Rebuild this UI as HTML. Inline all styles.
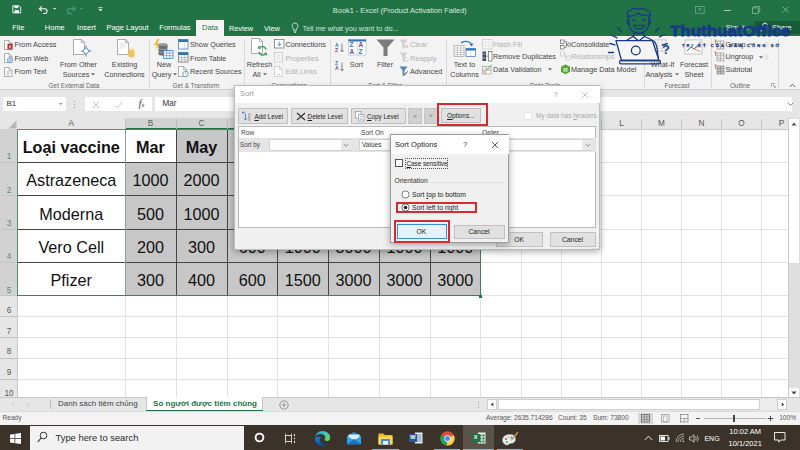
<!DOCTYPE html>
<html lang="vi"><head><meta charset="utf-8"><title>Book1 - Excel</title>
<style>
html,body{margin:0;padding:0;}
body{width:800px;height:450px;overflow:hidden;position:relative;background:#fff;font-family:"Liberation Sans",sans-serif;}
#app{position:absolute;left:0;top:0;width:800px;height:450px;overflow:hidden;}
#app div,#app svg{position:absolute;box-sizing:border-box;}
.t{white-space:nowrap;}
u{text-decoration:underline;text-decoration-thickness:0.5px;text-underline-offset:0.5px;}
</style></head><body><div id="app">
<div style="left:0px;top:0px;width:800px;height:35.5px;background:#217346;"></div>
<svg style="left:12px;top:5.3px;" width="9.5" height="8.7" viewBox="0 0 12 11"><path d="M1 1h8l2 2v7H1z" fill="none" stroke="#fff" stroke-width="1.1"/><rect x="3" y="1" width="5" height="3" fill="#fff"/><rect x="3.2" y="6.5" width="5.6" height="3.5" fill="#fff"/></svg>
<svg style="left:38px;top:5.3px;" width="11.5" height="9" viewBox="0 0 14 11"><path d="M2 4.5h6a3 3 0 0 1 0 6H6" fill="none" stroke="#fff" stroke-width="1.3"/><path d="M4.6 1.6L1.6 4.5l3 2.9" fill="none" stroke="#fff" stroke-width="1.3"/></svg>
<svg style="left:52.5px;top:8.3px;" width="4" height="2.4" viewBox="0 0 5 3"><path d="M0 0h4L2 2.2z" fill="#dfe9e3"/></svg>
<svg style="left:65px;top:5.3px;" width="11.5" height="9" viewBox="0 0 14 11"><path d="M12 4.5H6a3 3 0 0 0 0 6h2" fill="none" stroke="#5f9a7b" stroke-width="1.3"/><path d="M9.4 1.6l3 2.9-3 2.9" fill="none" stroke="#5f9a7b" stroke-width="1.3"/></svg>
<svg style="left:79.5px;top:8.3px;" width="4" height="2.4" viewBox="0 0 5 3"><path d="M0 0h4L2 2.2z" fill="#5f9a7b"/></svg>
<svg style="left:98px;top:6.8px;" width="5" height="5" viewBox="0 0 6 6"><path d="M0.5 0.8h5" stroke="#fff" stroke-width="0.9"/><path d="M0.5 2.6h5L3 5.2z" fill="#fff"/></svg>
<div class="t" style="top:5.7px;font-size:7.4px;line-height:9.6px;color:#d9e8df;left:399.8px;transform:translateX(-50%);">Book1 - Excel (Product Activation Failed)</div>
<svg style="left:695px;top:5.6px;" width="9.6" height="8" viewBox="0 0 12 10"><rect x="0.5" y="0.5" width="11" height="8.5" fill="none" stroke="#7fae94" stroke-width="0.9"/><path d="M6 2.5v4M4.3 4.2L6 2.5l1.7 1.7" fill="none" stroke="#7fae94" stroke-width="0.9"/></svg>
<div style="left:724.3px;top:10px;width:7.2px;height:0.9px;background:#a9c9b7;"></div>
<svg style="left:752.3px;top:5.8px;" width="8.5" height="7.8" viewBox="0 0 11 10"><rect x="0.5" y="2.5" width="7.5" height="7" fill="none" stroke="#a9c9b7" stroke-width="0.800"/><path d="M2.5 2.5V0.5H10v7H8" fill="none" stroke="#a9c9b7" stroke-width="0.800"/></svg>
<svg style="left:782px;top:6px;" width="7.2" height="7.2" viewBox="0 0 10 10"><path d="M1 1l8 8M9 1l-8 8" stroke="#b5d1c1" stroke-width="0.900"/></svg>
<div class="t" style="top:23.4px;font-size:7.5px;line-height:9.8px;color:#fff;left:18.3px;transform:translateX(-50%);">File</div>
<div class="t" style="top:23.4px;font-size:7.5px;line-height:9.8px;color:#fff;left:54.8px;transform:translateX(-50%);">Home</div>
<div class="t" style="top:23.4px;font-size:7.5px;line-height:9.8px;color:#fff;left:86.5px;transform:translateX(-50%);">Insert</div>
<div class="t" style="top:23.4px;font-size:7.5px;line-height:9.8px;color:#fff;left:127.5px;transform:translateX(-50%);">Page Layout</div>
<div class="t" style="top:23.4px;font-size:7.5px;line-height:9.8px;color:#fff;left:175px;transform:translateX(-50%);">Formulas</div>
<div style="left:196px;top:20px;width:28px;height:16px;background:#f3f3f3;"></div>
<div class="t" style="top:23.4px;font-size:7.5px;line-height:9.8px;color:#217346;left:210px;transform:translateX(-50%);">Data</div>
<div class="t" style="top:23.5px;font-size:7.4px;line-height:9.6px;color:#fff;left:241px;transform:translateX(-50%);">Review</div>
<div class="t" style="top:23.5px;font-size:7.4px;line-height:9.6px;color:#fff;left:272px;transform:translateX(-50%);">View</div>
<svg style="left:291px;top:22px;" width="8" height="12" viewBox="0 0 8 12"><path d="M4 1a3 3 0 0 0-1.6 5.5V8h3.2V6.500A3 3 0 0 0 4 1z" fill="none" stroke="#e6f0ea" stroke-width="0.8"/><path d="M2.6 9.300h2.800M3 10.500h2" stroke="#e6f0ea" stroke-width="0.7"/></svg>
<div class="t" style="top:23.55px;font-size:7.3px;line-height:9.5px;color:#d3e3da;left:302.5px;">Tell me what you want to do...</div>
<div class="t" style="top:22.7px;font-size:7.4px;line-height:9.6px;color:#e8f1ec;left:737px;transform:translateX(-50%);">Sign in</div>
<div style="left:754px;top:20.5px;width:46px;height:13.5px;background:#185c37;"></div>
<svg style="left:760px;top:22px;" width="10" height="10" viewBox="0 0 10 10"><circle cx="5" cy="3.2" r="2.2" fill="none" stroke="#fff" stroke-width="0.9"/><path d="M1 9.500c0-2.200 1.800-3.400 4-3.400s4 1.200 4 3.400" fill="none" stroke="#fff" stroke-width="0.9"/></svg>
<div class="t" style="top:22.7px;font-size:7.4px;line-height:9.6px;color:#fff;left:772px;">Share</div>
<div style="left:0px;top:35.5px;width:800px;height:54px;background:#f3f3f3;"></div>
<div style="left:0px;top:89.3px;width:800px;height:0.8px;background:#d0d0d0;"></div>
<div style="left:0px;top:90px;width:800px;height:28px;background:#e6e6e6;"></div>
<div style="left:3px;top:97px;width:63px;height:14px;background:#fff;"></div>
<div class="t" style="top:99.1px;font-size:8px;line-height:10.4px;color:#333;left:6.5px;">B1</div>
<svg style="left:58.5px;top:102.8px;" width="4" height="3" viewBox="0 0 4 3"><path d="M0 0h3.600L1.800 2z" fill="#888"/></svg>
<div style="left:74px;top:100.5px;width:1px;height:1px;background:#999;"></div>
<div style="left:74px;top:103.5px;width:1px;height:1px;background:#999;"></div>
<div style="left:74px;top:106.5px;width:1px;height:1px;background:#999;"></div>
<div style="left:85px;top:97px;width:67px;height:14px;background:#fff;"></div>
<svg style="left:92px;top:100.5px;" width="8" height="8" viewBox="0 0 8 8"><path d="M1 1l6 6M7 1l-6 6" stroke="#bdbdbd" stroke-width="0.9"/></svg>
<svg style="left:114px;top:100.5px;" width="9" height="8" viewBox="0 0 9 8"><path d="M1 4.500l2.500 2.500L8 1" fill="none" stroke="#bdbdbd" stroke-width="0.9"/></svg>
<div class="t" style="top:97.15px;font-size:10.5px;line-height:13.7px;color:#444;left:141.5px;transform:translateX(-50%);font-family:'Liberation Serif',serif;"><i>f</i><span style="font-size:6.500px;font-style:italic">x</span></div>
<div style="left:155px;top:97px;width:637px;height:14px;background:#fff;"></div>
<div class="t" style="top:98.95px;font-size:8.2px;line-height:10.7px;color:#333;left:162.5px;">Mar</div>
<svg style="left:787px;top:102px;" width="7" height="5" viewBox="0 0 7 5"><path d="M0.800 0.800l2.700 2.700 2.700-2.700" fill="none" stroke="#777" stroke-width="0.9"/></svg>
<svg style="left:3.5px;top:39.5px;" width="10" height="11" viewBox="0 0 10 11"><path d="M0.5 0.5h4.5l3 3v6h-7.5z" fill="#fff" stroke="#8c8c8c" stroke-width="0.700"/><path d="M5.0 0.5v3h3" fill="none" stroke="#8c8c8c" stroke-width="0.600"/><rect x="3.500" y="3.800" width="5" height="5.700" fill="#b7282e"/><path d="M5 8.500l1-3.300 1 3.300" fill="none" stroke="#fff" stroke-width="0.600"/></svg>
<div class="t" style="top:39.9px;font-size:7.25px;line-height:9.4px;color:#444;left:14.5px;">From Access</div>
<svg style="left:3.5px;top:53px;" width="10" height="11" viewBox="0 0 10 11"><path d="M0.5 0.5h4.5l3 3v6h-7.5z" fill="#fff" stroke="#8c8c8c" stroke-width="0.700"/><path d="M5.0 0.5v3h3" fill="none" stroke="#8c8c8c" stroke-width="0.600"/><circle cx="6" cy="7.200" r="2.600" fill="#dfeefa" stroke="#3a86c8" stroke-width="0.700"/><path d="M3.400 7.200h5.200M6 4.600v5.200" stroke="#3a86c8" stroke-width="0.400"/></svg>
<div class="t" style="top:53.6px;font-size:7.25px;line-height:9.4px;color:#444;left:14.5px;">From Web</div>
<svg style="left:3.5px;top:67px;" width="10" height="11" viewBox="0 0 10 11"><path d="M0.5 0.5h4.5l3 3v6h-7.5z" fill="#fff" stroke="#8c8c8c" stroke-width="0.700"/><path d="M5.0 0.5v3h3" fill="none" stroke="#8c8c8c" stroke-width="0.600"/><path d="M2.300 4.800h4M2.300 6.300h4M2.300 7.800h3" stroke="#8a8a8a" stroke-width="0.500"/></svg>
<div class="t" style="top:67.4px;font-size:7.25px;line-height:9.4px;color:#444;left:14.5px;">From Text</div>
<svg style="left:72px;top:39px;" width="20" height="21" viewBox="0 0 20 21"><path d="M1.5 0.5h8l3 3v12h-11z" fill="#fff" stroke="#8c8c8c" stroke-width="0.700"/><path d="M9.5 0.5v3h3" fill="none" stroke="#8c8c8c" stroke-width="0.600"/><path d="M14 8.500l3.300 3.500-3.300 3.500-3.300-3.500z" fill="#fff" stroke="#2e75b6" stroke-width="1"/><path d="M14 6.500v2M14 15.500v2M8.700 12h2M17.300 12h2" stroke="#2e75b6" stroke-width="0.800"/></svg>
<div class="t" style="top:59.9px;font-size:7.25px;line-height:9.4px;color:#444;left:78.5px;transform:translateX(-50%);">From Other</div>
<div class="t" style="top:69.9px;font-size:7.25px;line-height:9.4px;color:#444;left:76px;transform:translateX(-50%);">Sources</div>
<svg style="left:91px;top:73px;" width="4" height="3" viewBox="0 0 4 3"><path d="M0 0.300h4L2 2.600z" fill="#666"/></svg>
<svg style="left:116px;top:39px;" width="20" height="21" viewBox="0 0 20 21"><path d="M1.5 0.5h8l3 3v12h-11z" fill="#fff" stroke="#8c8c8c" stroke-width="0.700"/><path d="M9.5 0.5v3h3" fill="none" stroke="#8c8c8c" stroke-width="0.600"/><path d="M3.500 5h6M3.500 7h6M3.500 9h4" stroke="#c9c9c9" stroke-width="0.600"/><path d="M12.500 10.500h6v7a3 1 0 0 1-6 0z" fill="#efc456"/><ellipse cx="15.500" cy="10.500" rx="3" ry="1" fill="#f6d982"/></svg>
<div class="t" style="top:59.9px;font-size:7.25px;line-height:9.4px;color:#444;left:124.5px;transform:translateX(-50%);">Existing</div>
<div class="t" style="top:69.9px;font-size:7.25px;line-height:9.4px;color:#444;left:124.5px;transform:translateX(-50%);">Connections</div>
<div class="t" style="top:81.75px;font-size:6.4px;line-height:8.3px;color:#666;left:74px;transform:translateX(-50%);">Get External Data</div>
<div style="left:148.5px;top:38.5px;width:0.7px;height:49px;background:#dadada;"></div>
<svg style="left:152px;top:37.5px;" width="22" height="22" viewBox="0 0 22 22"><path d="M5.500 1L2 7h2.800L3.300 12 8 5.500H5.200L7.500 1z" fill="#f2b533"/><path d="M6.500 6.500h9v9.500a4.500 1.600 0 0 1-9 0z" fill="#6d6d6d"/><ellipse cx="11" cy="6.500" rx="4.500" ry="1.600" fill="#9a9a9a"/><path d="M6.500 10a4.500 1.600 0 0 0 9 0M6.500 13a4.500 1.600 0 0 0 9 0" fill="none" stroke="#cfcfcf" stroke-width="0.500"/><rect x="11.500" y="12.500" width="9.500" height="8" fill="#fff" stroke="#2e75b6" stroke-width="0.700"/><path d="M11.500 15h9.500M11.500 17.700h9.500M14.700 12.500v8M17.800 12.500v8" stroke="#2e75b6" stroke-width="0.500"/></svg>
<div class="t" style="top:59.9px;font-size:7.25px;line-height:9.4px;color:#444;left:164px;transform:translateX(-50%);">New</div>
<div class="t" style="top:69.9px;font-size:7.25px;line-height:9.4px;color:#444;left:161.5px;transform:translateX(-50%);">Query</div>
<svg style="left:173px;top:73px;" width="4" height="3" viewBox="0 0 4 3"><path d="M0 0.300h4L2 2.600z" fill="#666"/></svg>
<svg style="left:178px;top:38.5px;" width="11" height="11" viewBox="0 0 11 11"><rect x="0.500" y="0.500" width="9.500" height="9.500" fill="#fff" stroke="#2e75b6" stroke-width="0.700"/><rect x="0.500" y="0.500" width="9.500" height="2.500" fill="#2e75b6"/><path d="M6.500 3v7" stroke="#9cc3e6" stroke-width="0.500"/></svg>
<div class="t" style="top:39.9px;font-size:7.25px;line-height:9.4px;color:#444;left:190px;">Show Queries</div>
<svg style="left:178px;top:52px;" width="11" height="11" viewBox="0 0 11 11"><rect x="0.500" y="0.500" width="9.500" height="9.500" fill="#fff" stroke="#5a5a5a" stroke-width="0.700"/><rect x="0.500" y="0.500" width="9.500" height="2.500" fill="#2e75b6"/><path d="M0.500 5.500h9.500M0.500 7.800h9.500M3.700 3v7M6.800 3v7" stroke="#8a8a8a" stroke-width="0.500"/></svg>
<div class="t" style="top:53.6px;font-size:7.25px;line-height:9.4px;color:#444;left:190px;">From Table</div>
<svg style="left:178px;top:66px;" width="12" height="12" viewBox="0 0 12 12"><path d="M0.5 0.5h5l3 3v7h-8z" fill="#fff" stroke="#8c8c8c" stroke-width="0.700"/><path d="M5.5 0.5v3h3" fill="none" stroke="#8c8c8c" stroke-width="0.600"/><circle cx="7.500" cy="8" r="2.800" fill="#fff" stroke="#2e75b6" stroke-width="0.700"/><path d="M7.500 6.300V8l1.200 0.800" fill="none" stroke="#2e75b6" stroke-width="0.600"/></svg>
<div class="t" style="top:67.4px;font-size:7.25px;line-height:9.4px;color:#444;left:190px;">Recent Sources</div>
<div class="t" style="top:81.75px;font-size:6.4px;line-height:8.3px;color:#666;left:196px;transform:translateX(-50%);">Get &amp; Transform</div>
<div style="left:244px;top:38.5px;width:0.7px;height:49px;background:#dadada;"></div>
<svg style="left:249px;top:38px;" width="22" height="22" viewBox="0 0 22 22"><path d="M2.5 0.5h8l3 3v12h-11z" fill="#fff" stroke="#8c8c8c" stroke-width="0.700"/><path d="M10.5 0.5v3h3" fill="none" stroke="#8c8c8c" stroke-width="0.600"/><path d="M17 11.500a4 4 0 0 0-7-1.500" fill="none" stroke="#3aa55d" stroke-width="1.500"/><path d="M9 7.500v3.300h3.300z" fill="#3aa55d"/><path d="M10 14a4 4 0 0 0 7 1.500" fill="none" stroke="#3aa55d" stroke-width="1.500"/><path d="M18 18v-3.300h-3.300z" fill="#3aa55d"/></svg>
<div class="t" style="top:59.9px;font-size:7.25px;line-height:9.4px;color:#444;left:259.5px;transform:translateX(-50%);">Refresh</div>
<div class="t" style="top:69.9px;font-size:7.25px;line-height:9.4px;color:#444;left:256.5px;transform:translateX(-50%);">All</div>
<svg style="left:263px;top:73px;" width="4" height="3" viewBox="0 0 4 3"><path d="M0 0.300h4L2 2.600z" fill="#666"/></svg>
<svg style="left:274px;top:38.5px;" width="11" height="11" viewBox="0 0 11 11"><rect x="0.500" y="0.500" width="9.500" height="8.500" fill="#fff" stroke="#6a6a6a" stroke-width="0.700"/><path d="M5.250 2.500v4M3.500 5l1.750 1.700L7 5" fill="none" stroke="#2e75b6" stroke-width="0.800"/></svg>
<div class="t" style="top:39.9px;font-size:7.25px;line-height:9.4px;color:#444;left:285.5px;">Connections</div>
<svg style="left:274px;top:52px;" width="11" height="11" viewBox="0 0 11 11"><rect x="0.500" y="0.500" width="8" height="9.500" fill="#f7f7f7" stroke="#c3c3c3" stroke-width="0.700"/><path d="M2.500 3h4M2.500 5h4M2.500 7h4" stroke="#d0d0d0" stroke-width="0.600"/></svg>
<div class="t" style="top:53.6px;font-size:7.25px;line-height:9.4px;color:#b0b0b0;left:285.5px;">Properties</div>
<svg style="left:274px;top:66px;" width="11" height="11" viewBox="0 0 11 11"><path d="M0.5 0.5h5l3 3v7h-8z" fill="#fff" stroke="#c3c3c3" stroke-width="0.700"/><path d="M5.5 0.5v3h3" fill="none" stroke="#c3c3c3" stroke-width="0.600"/><path d="M3 8.500h3.500" stroke="#c9c9c9" stroke-width="1"/></svg>
<div class="t" style="top:67.4px;font-size:7.25px;line-height:9.4px;color:#b0b0b0;left:285.5px;">Edit Links</div>
<div class="t" style="top:81.75px;font-size:6.4px;line-height:8.3px;color:#666;left:289px;transform:translateX(-50%);">Connections</div>
<div style="left:330px;top:38.5px;width:0.7px;height:49px;background:#dadada;"></div>
<div class="t" style="left:335px;top:42.8px;font-size:5px;line-height:5px;font-weight:700;color:#2e75b6;">A</div>
<div class="t" style="left:335px;top:47.8px;font-size:5px;line-height:5px;font-weight:700;color:#7a3f98;">Z</div>
<svg style="left:339.5px;top:43.3px;" width="4" height="10" viewBox="0 0 4 10"><path d="M2 0.500v8M0.500 7l1.500 1.800L3.500 7" fill="none" stroke="#555" stroke-width="0.700"/></svg>
<div class="t" style="left:335px;top:61.0px;font-size:5px;line-height:5px;font-weight:700;color:#2e75b6;">Z</div>
<div class="t" style="left:335px;top:66.0px;font-size:5px;line-height:5px;font-weight:700;color:#7a3f98;">A</div>
<svg style="left:339.5px;top:61.5px;" width="4" height="10" viewBox="0 0 4 10"><path d="M2 0.500v8M0.500 7l1.500 1.800L3.500 7" fill="none" stroke="#555" stroke-width="0.700"/></svg>
<svg style="left:347.5px;top:39px;" width="19" height="17" viewBox="0 0 19 17"><rect x="0.500" y="0.500" width="17.500" height="15.500" fill="#fff" stroke="#9cc3e6" stroke-width="0.700"/><rect x="0.500" y="0.500" width="17.500" height="2" fill="#2e75b6"/><path d="M9.250 2.500v13.500" stroke="#9cc3e6" stroke-width="0.600"/></svg>
<div class="t" style="left:349.500px;top:42.300px;font-size:6.500px;line-height:6.500px;font-weight:700;color:#2e75b6;">Z<br><span style="color:#7a3f98">A</span></div>
<div class="t" style="left:358.500px;top:42.300px;font-size:6.500px;line-height:6.500px;font-weight:700;color:#7a3f98;">A<br><span style="color:#2e75b6">Z</span></div>
<div class="t" style="top:59.9px;font-size:7.25px;line-height:9.4px;color:#444;left:356.5px;transform:translateX(-50%);">Sort</div>
<svg style="left:376px;top:39px;" width="19" height="18" viewBox="0 0 19 18"><path d="M0.500 0.500h18L11.500 8.500v8.500h-4V8.500z" fill="#7b7b7b"/></svg>
<div class="t" style="top:59.9px;font-size:7.25px;line-height:9.4px;color:#444;left:385px;transform:translateX(-50%);">Filter</div>
<svg style="left:398.5px;top:38.5px;" width="11" height="11" viewBox="0 0 11 11"><path d="M0.500 0.500h8L5.500 4.500v5h-2V4.500z" fill="#cfcfcf"/><path d="M6 6l3 3M9 6l-3 3" stroke="#e3a6a6" stroke-width="0.800"/></svg>
<div class="t" style="top:39.9px;font-size:7.25px;line-height:9.4px;color:#b0b0b0;left:410px;">Clear</div>
<svg style="left:398.5px;top:52px;" width="11" height="11" viewBox="0 0 11 11"><path d="M0.500 0.500h8L5.500 4.500v5h-2V4.500z" fill="#cfcfcf"/><path d="M9 7.500a2 2 0 1 1-1-1.700" fill="none" stroke="#bdbdbd" stroke-width="0.700"/></svg>
<div class="t" style="top:53.6px;font-size:7.25px;line-height:9.4px;color:#b0b0b0;left:410px;">Reapply</div>
<svg style="left:398.5px;top:66px;" width="11" height="11" viewBox="0 0 11 11"><path d="M0.500 0.500h8L5.500 4.500v5h-2V4.500z" fill="#5b87b8"/><path d="M5 9.500l3.500-4" stroke="#333" stroke-width="0.900"/></svg>
<div class="t" style="top:67.4px;font-size:7.25px;line-height:9.4px;color:#444;left:410px;">Advanced</div>
<div class="t" style="top:81.75px;font-size:6.4px;line-height:8.3px;color:#666;left:385px;transform:translateX(-50%);">Sort &amp; Filter</div>
<div style="left:446px;top:38.5px;width:0.7px;height:49px;background:#dadada;"></div>
<svg style="left:453px;top:38px;" width="24" height="20" viewBox="0 0 24 20"><rect x="1" y="7.500" width="10" height="11" fill="#fff" stroke="#9a9a9a" stroke-width="0.600"/><path d="M1 10h10M1 12.200h10M1 14.400h10M1 16.600h10M4.300 7.500v11M7.700 7.500v11" stroke="#9a9a9a" stroke-width="0.500"/><rect x="13" y="10.500" width="9.500" height="8" fill="#fff" stroke="#2e75b6" stroke-width="0.700"/><rect x="13" y="10.500" width="9.500" height="2" fill="#2e75b6"/><path d="M17.750 12.500v6" stroke="#9cc3e6" stroke-width="0.500"/><path d="M8 5a6 4.500 0 0 1 10.500 2" fill="none" stroke="#2e75b6" stroke-width="1.200"/><path d="M16.500 6l2.300 2.500L20.500 5.500z" fill="#2e75b6"/></svg>
<div class="t" style="top:59.9px;font-size:7.25px;line-height:9.4px;color:#444;left:464.5px;transform:translateX(-50%);">Text to</div>
<div class="t" style="top:69.9px;font-size:7.25px;line-height:9.4px;color:#444;left:464.5px;transform:translateX(-50%);">Columns</div>
<svg style="left:482px;top:38.5px;" width="11" height="11" viewBox="0 0 11 11"><rect x="0.500" y="0.500" width="9.500" height="9.500" fill="#fafafa" stroke="#c8c8c8" stroke-width="0.700"/><path d="M0.500 3.500h9.500M0.500 6.700h9.500M3.700 0.500v9.500M6.800 0.500v9.500" stroke="#d3d3d3" stroke-width="0.500"/></svg>
<div class="t" style="top:39.6px;font-size:7.25px;line-height:9.4px;color:#b0b0b0;left:493px;">Flash Fill</div>
<svg style="left:481.5px;top:51px;" width="11" height="11" viewBox="0 0 11 11"><rect x="0.500" y="0.500" width="3.500" height="9.500" fill="#4a4a4a"/><rect x="6.500" y="0.500" width="3.500" height="9.500" fill="#fff" stroke="#4a4a4a" stroke-width="0.600"/><rect x="1.300" y="2" width="2" height="2" fill="#5b9bd5"/><rect x="1.300" y="6" width="2" height="2" fill="#5b9bd5"/><path d="M4.200 5.200h2" stroke="#c0392b" stroke-width="0.700"/></svg>
<div class="t" style="top:52.4px;font-size:7.25px;line-height:9.4px;color:#444;left:493px;">Remove Duplicates</div>
<svg style="left:481.5px;top:63.5px;" width="11" height="11" viewBox="0 0 11 11"><rect x="0.500" y="2.500" width="8.500" height="7.500" fill="#fff" stroke="#8a8a8a" stroke-width="0.600"/><path d="M0.500 6h8.500" stroke="#c0392b" stroke-width="0.600"/><path d="M3.500 3.500l1.800 2L9.500 0.800" fill="none" stroke="#3aa55d" stroke-width="1"/><circle cx="3" cy="8" r="1.100" fill="none" stroke="#c0392b" stroke-width="0.500"/></svg>
<div class="t" style="top:64.9px;font-size:7.25px;line-height:9.4px;color:#444;left:493px;">Data Validation</div>
<svg style="left:548px;top:68px;" width="4" height="3" viewBox="0 0 4 3"><path d="M0 0.300h4L2 2.600z" fill="#666"/></svg>
<svg style="left:559.5px;top:38.5px;" width="11" height="11" viewBox="0 0 11 11"><rect x="0.500" y="1" width="3.500" height="3.500" fill="#fff" stroke="#555" stroke-width="0.600"/><rect x="0.500" y="6.500" width="3.500" height="3.500" fill="#fff" stroke="#555" stroke-width="0.600"/><path d="M4 2.700h2.500v5.500H4M6.500 5.500h2" fill="none" stroke="#555" stroke-width="0.600"/><rect x="8" y="4" width="2.500" height="3" fill="#fff" stroke="#555" stroke-width="0.600"/></svg>
<div class="t" style="top:39.6px;font-size:7.25px;line-height:9.4px;color:#444;left:571px;">Consolidate</div>
<svg style="left:559.5px;top:51px;" width="11" height="11" viewBox="0 0 11 11"><rect x="0.500" y="1" width="3.500" height="4" fill="#f5f5f5" stroke="#c3c3c3" stroke-width="0.600"/><rect x="6.500" y="5" width="3.500" height="4" fill="#f5f5f5" stroke="#c3c3c3" stroke-width="0.600"/><path d="M4 3h1.500v4h1" fill="none" stroke="#c3c3c3" stroke-width="0.600"/></svg>
<div class="t" style="top:52.4px;font-size:7.25px;line-height:9.4px;color:#b0b0b0;left:571px;">Relationships</div>
<svg style="left:559.5px;top:63.5px;" width="11" height="11" viewBox="0 0 11 11"><path d="M5.500 0.500l4.500 2.300v5L5.500 10.200 1 7.800v-5z" fill="#4ea72e"/><path d="M3.500 4v3.500h4V4z" fill="#fff" opacity="0.900"/><path d="M3.500 5.700h4M5.500 4v3.500" stroke="#4ea72e" stroke-width="0.500"/></svg>
<div class="t" style="top:64.9px;font-size:7.25px;line-height:9.4px;color:#444;left:571px;">Manage Data Model</div>
<div class="t" style="top:81.75px;font-size:6.4px;line-height:8.3px;color:#666;left:545px;transform:translateX(-50%);">Data Tools</div>
<div style="left:644px;top:38.5px;width:0.7px;height:49px;background:#dadada;"></div>
<svg style="left:653px;top:38px;" width="20" height="21" viewBox="0 0 20 21"><rect x="1" y="2" width="12" height="11" fill="#fff" stroke="#a0a0a0" stroke-width="0.600"/><path d="M1 5h12M1 7.700h12M1 10.400h12M5 2v11M9 2v11" stroke="#b5b5b5" stroke-width="0.500"/></svg>
<div class="t" style="top:42.05px;font-size:13px;line-height:16.9px;color:#1f4e9c;font-weight:700;left:666px;transform:translateX(-50%);">?</div>
<div class="t" style="top:59.9px;font-size:7.25px;line-height:9.4px;color:#444;left:662.5px;transform:translateX(-50%);">What-If</div>
<div class="t" style="top:69.9px;font-size:7.25px;line-height:9.4px;color:#444;left:659px;transform:translateX(-50%);">Analysis</div>
<svg style="left:675px;top:73px;" width="4" height="3" viewBox="0 0 4 3"><path d="M0 0.300h4L2 2.600z" fill="#666"/></svg>
<svg style="left:684px;top:38px;" width="20" height="21" viewBox="0 0 20 21"><rect x="1" y="2" width="17" height="14" fill="#fff" stroke="#a0a0a0" stroke-width="0.600"/><path d="M3 13l4-4 3 2 6.500-7" fill="none" stroke="#2e75b6" stroke-width="1"/><path d="M10 11l6.500-3.500M10 11l6.500 2.500" fill="none" stroke="#e07b39" stroke-width="0.800"/></svg>
<div class="t" style="top:59.9px;font-size:7.25px;line-height:9.4px;color:#444;left:694px;transform:translateX(-50%);">Forecast</div>
<div class="t" style="top:69.9px;font-size:7.25px;line-height:9.4px;color:#444;left:694px;transform:translateX(-50%);">Sheet</div>
<div class="t" style="top:81.75px;font-size:6.4px;line-height:8.3px;color:#666;left:677px;transform:translateX(-50%);">Forecast</div>
<div style="left:710.5px;top:38.5px;width:0.7px;height:49px;background:#dadada;"></div>
<svg style="left:714px;top:38.5px;" width="11" height="11" viewBox="0 0 11 11"><rect x="3" y="2" width="7" height="8" fill="#ececec" stroke="#8a8a8a" stroke-width="0.600"/><path d="M3 4.700h7M3 7.300h7M6.500 2v8" stroke="#8a8a8a" stroke-width="0.500"/><path d="M1.500 1v4M0.500 1h2" stroke="#c0582b" stroke-width="0.700"/></svg>
<div class="t" style="top:39.6px;font-size:7.25px;line-height:9.4px;color:#444;left:725.5px;">Group</div>
<svg style="left:749px;top:43px;" width="4" height="3" viewBox="0 0 4 3"><path d="M0 0.300h4L2 2.600z" fill="#999"/></svg>
<svg style="left:714px;top:51px;" width="11" height="11" viewBox="0 0 11 11"><rect x="3" y="2" width="7" height="8" fill="#ececec" stroke="#8a8a8a" stroke-width="0.600"/><path d="M3 4.700h7M3 7.300h7M6.500 2v8" stroke="#8a8a8a" stroke-width="0.500"/><path d="M1.500 1v4M0.500 1h2" stroke="#c0582b" stroke-width="0.700"/></svg>
<div class="t" style="top:52.4px;font-size:7.25px;line-height:9.4px;color:#444;left:725.5px;">Ungroup</div>
<svg style="left:759px;top:55.5px;" width="4" height="3" viewBox="0 0 4 3"><path d="M0 0.300h4L2 2.600z" fill="#666"/></svg>
<svg style="left:714px;top:63.5px;" width="11" height="11" viewBox="0 0 11 11"><rect x="3" y="2" width="7" height="8" fill="#c4c4c4" stroke="#777" stroke-width="0.600"/><path d="M3 4.700h7M3 7.300h7M6.500 2v8" stroke="#777" stroke-width="0.500"/><path d="M1.500 1v4M0.500 1h2" stroke="#c0582b" stroke-width="0.700"/></svg>
<div class="t" style="top:64.9px;font-size:7.25px;line-height:9.4px;color:#444;left:725.5px;">Subtotal</div>
<svg style="left:764px;top:42px;" width="7" height="6" viewBox="0 0 7 6"><path d="M0.500 1h4M0.500 3h4M0.500 5h4" stroke="#c9c9c9" stroke-width="0.600"/><path d="M5 1.500l1.300 1" stroke="#e3a6a6" stroke-width="0.600"/></svg>
<svg style="left:764px;top:54px;" width="7" height="6" viewBox="0 0 7 6"><path d="M0.500 1h4M0.500 3h4M0.500 5h4" stroke="#c9c9c9" stroke-width="0.600"/></svg>
<div class="t" style="top:81.75px;font-size:6.4px;line-height:8.3px;color:#666;left:740px;transform:translateX(-50%);">Outline</div>
<div style="left:778px;top:38.5px;width:0.7px;height:49px;background:#dadada;"></div>
<svg style="left:771px;top:83px;" width="5" height="5" viewBox="0 0 5 5"><path d="M0.500 4V0.500H4" fill="none" stroke="#777" stroke-width="0.600"/><path d="M2 2l2.300 2.300M4.300 2.800v1.500H2.800" fill="none" stroke="#777" stroke-width="0.600"/></svg>
<svg style="left:789px;top:83px;" width="7" height="5" viewBox="0 0 7 5"><path d="M0.800 4L3.500 1.200 6.200 4" fill="none" stroke="#555" stroke-width="0.900"/></svg>
<div style="left:0px;top:117.5px;width:800px;height:280px;background:#fff;"></div>
<div style="left:0px;top:117.5px;width:800px;height:11.5px;background:#e6e6e6;"></div>
<div style="left:125px;top:117.5px;width:355.5px;height:11.5px;background:#d2d2d2;"></div>
<div style="left:125px;top:128px;width:355.5px;height:1px;background:#217346;"></div>
<div style="left:0px;top:128.5px;width:800px;height:0.6px;background:#c8c8c8;"></div>
<svg style="left:7.5px;top:119.5px;" width="9" height="9" viewBox="0 0 9 9"><path d="M8.500 0.300v8.200H0.500z" fill="#b6b6b6"/></svg>
<div class="t" style="top:118.65px;font-size:8.2px;line-height:10.7px;color:#555;left:71.25px;transform:translateX(-50%);">A</div>
<div style="left:124.5px;top:118.5px;width:0.8px;height:10px;background:#c4c4c4;"></div>
<div class="t" style="top:118.65px;font-size:8.2px;line-height:10.7px;color:#3f7055;left:150.5px;transform:translateX(-50%);">B</div>
<div style="left:175.5px;top:118.5px;width:0.8px;height:10px;background:#bdbdbd;"></div>
<div class="t" style="top:118.65px;font-size:8.2px;line-height:10.7px;color:#3f7055;left:201.5px;transform:translateX(-50%);">C</div>
<div style="left:226.5px;top:118.5px;width:0.8px;height:10px;background:#bdbdbd;"></div>
<div class="t" style="top:118.65px;font-size:8.2px;line-height:10.7px;color:#3f7055;left:252.25px;transform:translateX(-50%);">D</div>
<div style="left:277.0px;top:118.5px;width:0.8px;height:10px;background:#bdbdbd;"></div>
<div class="t" style="top:118.65px;font-size:8.2px;line-height:10.7px;color:#3f7055;left:302.75px;transform:translateX(-50%);">E</div>
<div style="left:327.5px;top:118.5px;width:0.8px;height:10px;background:#bdbdbd;"></div>
<div class="t" style="top:118.65px;font-size:8.2px;line-height:10.7px;color:#3f7055;left:353.5px;transform:translateX(-50%);">F</div>
<div style="left:378.5px;top:118.5px;width:0.8px;height:10px;background:#bdbdbd;"></div>
<div class="t" style="top:118.65px;font-size:8.2px;line-height:10.7px;color:#3f7055;left:404.5px;transform:translateX(-50%);">G</div>
<div style="left:429.5px;top:118.5px;width:0.8px;height:10px;background:#bdbdbd;"></div>
<div class="t" style="top:118.65px;font-size:8.2px;line-height:10.7px;color:#3f7055;left:455.25px;transform:translateX(-50%);">H</div>
<div style="left:480.0px;top:118.5px;width:0.8px;height:10px;background:#bdbdbd;"></div>
<div class="t" style="top:118.65px;font-size:8.2px;line-height:10.7px;color:#555;left:501.0px;transform:translateX(-50%);">I</div>
<div style="left:521.0px;top:118.5px;width:0.8px;height:10px;background:#c4c4c4;"></div>
<div class="t" style="top:118.65px;font-size:8.2px;line-height:10.7px;color:#555;left:541.5px;transform:translateX(-50%);">J</div>
<div style="left:561.0px;top:118.5px;width:0.8px;height:10px;background:#c4c4c4;"></div>
<div class="t" style="top:118.65px;font-size:8.2px;line-height:10.7px;color:#555;left:581.5px;transform:translateX(-50%);">K</div>
<div style="left:601.0px;top:118.5px;width:0.8px;height:10px;background:#c4c4c4;"></div>
<div class="t" style="top:118.65px;font-size:8.2px;line-height:10.7px;color:#555;left:621.5px;transform:translateX(-50%);">L</div>
<div style="left:641.0px;top:118.5px;width:0.8px;height:10px;background:#c4c4c4;"></div>
<div class="t" style="top:118.65px;font-size:8.2px;line-height:10.7px;color:#555;left:661.5px;transform:translateX(-50%);">M</div>
<div style="left:681.0px;top:118.5px;width:0.8px;height:10px;background:#c4c4c4;"></div>
<div class="t" style="top:118.65px;font-size:8.2px;line-height:10.7px;color:#555;left:701.5px;transform:translateX(-50%);">N</div>
<div style="left:721.0px;top:118.5px;width:0.8px;height:10px;background:#c4c4c4;"></div>
<div class="t" style="top:118.65px;font-size:8.2px;line-height:10.7px;color:#555;left:741.5px;transform:translateX(-50%);">O</div>
<div style="left:761.0px;top:118.5px;width:0.8px;height:10px;background:#c4c4c4;"></div>
<div class="t" style="top:118.65px;font-size:8.2px;line-height:10.7px;color:#555;left:781.5px;transform:translateX(-50%);">P</div>
<div style="left:801.0px;top:118.5px;width:0.8px;height:10px;background:#c4c4c4;"></div>
<div style="left:0px;top:129px;width:17.5px;height:268px;background:#e6e6e6;"></div>
<div style="left:0px;top:129px;width:17.5px;height:166.7px;background:#d2d2d2;"></div>
<div style="left:17px;top:129px;width:0.8px;height:268px;background:#c8c8c8;"></div>
<div style="left:16.8px;top:129px;width:1px;height:166.7px;background:#217346;"></div>
<div class="t" style="top:152.35px;font-size:8.2px;line-height:10.7px;color:#5a846e;left:9px;transform:translateX(-50%);">1</div>
<div style="left:0px;top:161.9px;width:17.5px;height:0.7px;background:#c4c4c4;"></div>
<div class="t" style="top:185.75px;font-size:8.2px;line-height:10.7px;color:#5a846e;left:9px;transform:translateX(-50%);">2</div>
<div style="left:0px;top:195.3px;width:17.5px;height:0.7px;background:#c4c4c4;"></div>
<div class="t" style="top:219.05px;font-size:8.2px;line-height:10.7px;color:#5a846e;left:9px;transform:translateX(-50%);">3</div>
<div style="left:0px;top:228.6px;width:17.5px;height:0.7px;background:#c4c4c4;"></div>
<div class="t" style="top:252.35px;font-size:8.2px;line-height:10.7px;color:#5a846e;left:9px;transform:translateX(-50%);">4</div>
<div style="left:0px;top:261.9px;width:17.5px;height:0.7px;background:#c4c4c4;"></div>
<div class="t" style="top:285.75px;font-size:8.2px;line-height:10.7px;color:#5a846e;left:9px;transform:translateX(-50%);">5</div>
<div style="left:0px;top:295.3px;width:17.5px;height:0.7px;background:#c4c4c4;"></div>
<div class="t" style="top:305.65px;font-size:8.2px;line-height:10.7px;color:#555;left:9px;transform:translateX(-50%);">6</div>
<div style="left:0px;top:316.2px;width:17.5px;height:0.7px;background:#c4c4c4;"></div>
<div class="t" style="top:326.55px;font-size:8.2px;line-height:10.7px;color:#555;left:9px;transform:translateX(-50%);">7</div>
<div style="left:0px;top:337.1px;width:17.5px;height:0.7px;background:#c4c4c4;"></div>
<div class="t" style="top:347.45px;font-size:8.2px;line-height:10.7px;color:#555;left:9px;transform:translateX(-50%);">8</div>
<div style="left:0px;top:358.0px;width:17.5px;height:0.7px;background:#c4c4c4;"></div>
<div class="t" style="top:368.35px;font-size:8.2px;line-height:10.7px;color:#555;left:9px;transform:translateX(-50%);">9</div>
<div style="left:0px;top:378.9px;width:17.5px;height:0.7px;background:#c4c4c4;"></div>
<div class="t" style="top:389.25px;font-size:8.2px;line-height:10.7px;color:#555;left:9px;transform:translateX(-50%);">10</div>
<div style="left:0px;top:399.8px;width:17.5px;height:0.7px;background:#c4c4c4;"></div>
<div class="t" style="top:410.15px;font-size:8.2px;line-height:10.7px;color:#555;left:9px;transform:translateX(-50%);">11</div>
<div style="left:0px;top:420.7px;width:17.5px;height:0.7px;background:#c4c4c4;"></div>
<div style="left:17.5px;top:295.4px;width:770.5px;height:0.7px;background:#e2e2e2;"></div>
<div style="left:17.5px;top:316.3px;width:770.5px;height:0.7px;background:#e2e2e2;"></div>
<div style="left:17.5px;top:337.2px;width:770.5px;height:0.7px;background:#e2e2e2;"></div>
<div style="left:17.5px;top:358.1px;width:770.5px;height:0.7px;background:#e2e2e2;"></div>
<div style="left:17.5px;top:379.0px;width:770.5px;height:0.7px;background:#e2e2e2;"></div>
<div style="left:480.5px;top:162.0px;width:307.5px;height:0.7px;background:#e2e2e2;"></div>
<div style="left:480.5px;top:195.4px;width:307.5px;height:0.7px;background:#e2e2e2;"></div>
<div style="left:480.5px;top:228.7px;width:307.5px;height:0.7px;background:#e2e2e2;"></div>
<div style="left:480.5px;top:262.0px;width:307.5px;height:0.7px;background:#e2e2e2;"></div>
<div style="left:124.7px;top:295.7px;width:0.7px;height:102px;background:#e2e2e2;"></div>
<div style="left:175.7px;top:295.7px;width:0.7px;height:102px;background:#e2e2e2;"></div>
<div style="left:226.7px;top:295.7px;width:0.7px;height:102px;background:#e2e2e2;"></div>
<div style="left:277.2px;top:295.7px;width:0.7px;height:102px;background:#e2e2e2;"></div>
<div style="left:327.7px;top:295.7px;width:0.7px;height:102px;background:#e2e2e2;"></div>
<div style="left:378.7px;top:295.7px;width:0.7px;height:102px;background:#e2e2e2;"></div>
<div style="left:429.7px;top:295.7px;width:0.7px;height:102px;background:#e2e2e2;"></div>
<div style="left:480.2px;top:295.7px;width:0.7px;height:102px;background:#e2e2e2;"></div>
<div style="left:521.2px;top:129px;width:0.7px;height:268px;background:#e2e2e2;"></div>
<div style="left:561.2px;top:129px;width:0.7px;height:268px;background:#e2e2e2;"></div>
<div style="left:601.2px;top:129px;width:0.7px;height:268px;background:#e2e2e2;"></div>
<div style="left:641.2px;top:129px;width:0.7px;height:268px;background:#e2e2e2;"></div>
<div style="left:681.2px;top:129px;width:0.7px;height:268px;background:#e2e2e2;"></div>
<div style="left:721.2px;top:129px;width:0.7px;height:268px;background:#e2e2e2;"></div>
<div style="left:761.2px;top:129px;width:0.7px;height:268px;background:#e2e2e2;"></div>
<div style="left:125px;top:129px;width:355.5px;height:166.7px;background:#c7c7c7;"></div>
<div style="left:125.5px;top:129.5px;width:50.5px;height:32.5px;background:#fff;"></div>
<div style="left:17.5px;top:128.6px;width:463px;height:0.85px;background:#444;"></div>
<div style="left:17.5px;top:161.9px;width:463px;height:0.85px;background:#444;"></div>
<div style="left:17.5px;top:195.3px;width:463px;height:0.85px;background:#444;"></div>
<div style="left:17.5px;top:228.6px;width:463px;height:0.85px;background:#444;"></div>
<div style="left:17.5px;top:261.9px;width:463px;height:0.85px;background:#444;"></div>
<div style="left:17.5px;top:295.3px;width:463px;height:0.85px;background:#444;"></div>
<div style="left:17.1px;top:129px;width:0.85px;height:166.7px;background:#444;"></div>
<div style="left:124.6px;top:129px;width:0.85px;height:166.7px;background:#444;"></div>
<div style="left:175.6px;top:129px;width:0.85px;height:166.7px;background:#444;"></div>
<div style="left:226.6px;top:129px;width:0.85px;height:166.7px;background:#444;"></div>
<div style="left:277.1px;top:129px;width:0.85px;height:166.7px;background:#444;"></div>
<div style="left:327.6px;top:129px;width:0.85px;height:166.7px;background:#444;"></div>
<div style="left:378.6px;top:129px;width:0.85px;height:166.7px;background:#444;"></div>
<div style="left:429.6px;top:129px;width:0.85px;height:166.7px;background:#444;"></div>
<div style="left:480.1px;top:129px;width:0.85px;height:166.7px;background:#444;"></div>
<div style="left:17px;top:128.5px;width:108.5px;height:1.2px;background:#5a8f72;"></div>
<div style="left:17px;top:128.5px;width:1.2px;height:167.5px;background:#5a8f72;"></div>
<div style="left:124.5px;top:129px;width:1.1px;height:166.7px;background:#8fa298;"></div>
<div style="left:125px;top:128.5px;width:355.5px;height:1.2px;background:#3f8b63;"></div>
<div style="left:17px;top:295.2px;width:464px;height:1.2px;background:#3f7f5c;"></div>
<div style="left:479.9px;top:129px;width:1.2px;height:167px;background:#3f7f5c;"></div>
<div style="left:479.3px;top:294.6px;width:3px;height:3px;background:#217346;"></div>
<div class="t" style="top:136.85px;font-size:16.2px;line-height:20px;color:#111;font-weight:700;left:71.25px;transform:translateX(-50%);">Loại vaccine</div>
<div class="t" style="top:136.85px;font-size:16.2px;line-height:20px;color:#111;font-weight:700;left:150.5px;transform:translateX(-50%);">Mar</div>
<div class="t" style="top:136.85px;font-size:16.2px;line-height:20px;color:#111;font-weight:700;left:201.5px;transform:translateX(-50%);">May</div>
<div class="t" style="top:170.2px;font-size:16.2px;line-height:20px;color:#111;left:71.25px;transform:translateX(-50%);">Astrazeneca</div>
<div class="t" style="top:170.2px;font-size:16.2px;line-height:20px;color:#111;left:150.5px;transform:translateX(-50%);">1000</div>
<div class="t" style="top:170.2px;font-size:16.2px;line-height:20px;color:#111;left:201.5px;transform:translateX(-50%);">2000</div>
<div class="t" style="top:203.55px;font-size:16.2px;line-height:20px;color:#111;left:71.25px;transform:translateX(-50%);">Moderna</div>
<div class="t" style="top:203.55px;font-size:16.2px;line-height:20px;color:#111;left:150.5px;transform:translateX(-50%);">500</div>
<div class="t" style="top:203.55px;font-size:16.2px;line-height:20px;color:#111;left:201.5px;transform:translateX(-50%);">1000</div>
<div class="t" style="top:236.85px;font-size:16.2px;line-height:20px;color:#111;left:71.25px;transform:translateX(-50%);">Vero Cell</div>
<div class="t" style="top:236.85px;font-size:16.2px;line-height:20px;color:#111;left:150.5px;transform:translateX(-50%);">200</div>
<div class="t" style="top:236.85px;font-size:16.2px;line-height:20px;color:#111;left:201.5px;transform:translateX(-50%);">300</div>
<div class="t" style="top:270.2px;font-size:16.2px;line-height:20px;color:#111;left:71.25px;transform:translateX(-50%);">Pfizer</div>
<div class="t" style="top:270.2px;font-size:16.2px;line-height:20px;color:#111;left:150.5px;transform:translateX(-50%);">300</div>
<div class="t" style="top:270.2px;font-size:16.2px;line-height:20px;color:#111;left:201.5px;transform:translateX(-50%);">400</div>
<div class="t" style="top:270.2px;font-size:16.2px;line-height:20px;color:#111;left:252.25px;transform:translateX(-50%);">600</div>
<div class="t" style="top:270.2px;font-size:16.2px;line-height:20px;color:#111;left:302.75px;transform:translateX(-50%);">1500</div>
<div class="t" style="top:270.2px;font-size:16.2px;line-height:20px;color:#111;left:353.5px;transform:translateX(-50%);">3000</div>
<div class="t" style="top:270.2px;font-size:16.2px;line-height:20px;color:#111;left:404.5px;transform:translateX(-50%);">3000</div>
<div class="t" style="top:270.2px;font-size:16.2px;line-height:20px;color:#111;left:455.25px;transform:translateX(-50%);">3000</div>
<div class="t" style="top:236.85px;font-size:16.2px;line-height:20px;color:#111;left:252.25px;transform:translateX(-50%);">600</div>
<div class="t" style="top:236.85px;font-size:16.2px;line-height:20px;color:#111;left:302.75px;transform:translateX(-50%);">1000</div>
<div class="t" style="top:236.85px;font-size:16.2px;line-height:20px;color:#111;left:353.5px;transform:translateX(-50%);">3000</div>
<div class="t" style="top:236.85px;font-size:16.2px;line-height:20px;color:#111;left:404.5px;transform:translateX(-50%);">1000</div>
<div class="t" style="top:236.85px;font-size:16.2px;line-height:20px;color:#111;left:455.25px;transform:translateX(-50%);">1000</div>
<div style="left:788px;top:117.5px;width:12px;height:280px;background:#dedede;"></div>
<div style="left:787.6px;top:117.5px;width:0.7px;height:280px;background:#c9c9c9;"></div>
<div style="left:789px;top:118.7px;width:9.5px;height:9px;background:#fff;"></div>
<svg style="left:791px;top:121.5px;" width="6" height="4" viewBox="0 0 6 4"><path d="M0.300 3.500L3 0.500 5.700 3.500z" fill="#555"/></svg>
<div style="left:789px;top:128.2px;width:9.5px;height:134.5px;background:#fff;"></div>
<div style="left:789px;top:388px;width:9.5px;height:9.5px;background:#fff;"></div>
<svg style="left:790.8px;top:390.8px;" width="6" height="4" viewBox="0 0 6 4"><path d="M0.300 0.500h5.400L3 3.500z" fill="#444"/></svg>
<div style="left:0px;top:397px;width:800px;height:14.5px;background:#e6e6e6;"></div>
<div style="left:0px;top:396.7px;width:800px;height:0.7px;background:#c6c6c6;"></div>
<svg style="left:11px;top:401px;" width="5" height="7" viewBox="0 0 5 7"><path d="M3.500 1L1.200 3.500 3.500 6" fill="none" stroke="#c6c6c6" stroke-width="0.800"/></svg>
<svg style="left:25px;top:401px;" width="5" height="7" viewBox="0 0 5 7"><path d="M1.500 1l2.300 2.500L1.500 6" fill="none" stroke="#c6c6c6" stroke-width="0.800"/></svg>
<div style="left:49.5px;top:399px;width:0.7px;height:10px;background:#bdbdbd;"></div>
<div class="t" style="top:398.8px;font-size:8px;line-height:10.4px;color:#444;left:97.8px;transform:translateX(-50%);">Danh sách tiêm chủng</div>
<div style="left:146px;top:397px;width:116.5px;height:13.5px;background:#fff;"></div>
<div style="left:146px;top:409.5px;width:116.5px;height:1.3px;background:#217346;"></div>
<div style="left:145.5px;top:397px;width:0.7px;height:13px;background:#c6c6c6;"></div>
<div style="left:262px;top:397px;width:0.7px;height:13px;background:#c6c6c6;"></div>
<div class="t" style="top:398.6px;font-size:8px;line-height:10.4px;color:#217346;font-weight:700;left:205px;transform:translateX(-50%);">Số người được tiêm chủng</div>
<svg style="left:278.5px;top:399.5px;" width="10" height="10" viewBox="0 0 10 10"><circle cx="5" cy="5" r="4.100" fill="none" stroke="#777" stroke-width="0.700"/><path d="M5 2.800v4.400M2.800 5h4.400" stroke="#777" stroke-width="0.700"/></svg>
<div style="left:478px;top:401.5px;width:1px;height:1px;background:#9a9a9a;"></div>
<div style="left:478px;top:404px;width:1px;height:1px;background:#9a9a9a;"></div>
<div style="left:478px;top:406.5px;width:1px;height:1px;background:#9a9a9a;"></div>
<div style="left:487px;top:398.5px;width:10px;height:11.5px;background:#fff;border:0.6px solid #cfcfcf;"></div>
<svg style="left:490px;top:402px;" width="4" height="5" viewBox="0 0 4 5"><path d="M3.300 0.400v4.200L0.700 2.500z" fill="#444"/></svg>
<div style="left:498px;top:398.5px;width:262px;height:11.5px;background:#fff;border:0.6px solid #cfcfcf;"></div>
<div style="left:760px;top:398.5px;width:17px;height:11.5px;background:#ececec;"></div>
<div style="left:777px;top:398.5px;width:10px;height:11.5px;background:#fff;border:0.6px solid #cfcfcf;"></div>
<svg style="left:780.5px;top:402px;" width="4" height="5" viewBox="0 0 4 5"><path d="M0.700 0.400v4.200l2.600-2.100z" fill="#444"/></svg>
<div style="left:0px;top:411.5px;width:800px;height:13.5px;background:#f3f3f3;"></div>
<div style="left:0px;top:411.2px;width:800px;height:0.6px;background:#dcdcdc;"></div>
<div class="t" style="top:414.0px;font-size:6.6px;line-height:8.6px;color:#555;left:2.5px;">Ready</div>
<div class="t" style="top:414.0px;font-size:6.6px;line-height:8.6px;color:#555;left:486px;">Average: 2635.714286</div>
<div class="t" style="top:414.0px;font-size:6.6px;line-height:8.6px;color:#555;left:558px;">Count: 35</div>
<div class="t" style="top:414.0px;font-size:6.6px;line-height:8.6px;color:#555;left:593px;">Sum: 73800</div>
<div style="left:638px;top:412.5px;width:15px;height:11.5px;background:#d6d6d6;"></div>
<svg style="left:641px;top:414px;" width="9" height="9" viewBox="0 0 9 9"><rect x="0.500" y="0.500" width="8" height="7.500" fill="none" stroke="#666" stroke-width="0.8"/><path d="M0.500 3h8M0.500 5.500h8M3.200 0.500v7.500M5.900 0.500v7.500" stroke="#666" stroke-width="0.6"/></svg>
<svg style="left:661px;top:414px;" width="9" height="9" viewBox="0 0 9 9"><rect x="0.500" y="0.500" width="7.500" height="7.500" fill="none" stroke="#999" stroke-width="0.8"/><rect x="2.500" y="2" width="3.500" height="6" fill="none" stroke="#999" stroke-width="0.6"/></svg>
<svg style="left:680px;top:414px;" width="9" height="9" viewBox="0 0 9 9"><rect x="0.500" y="0.500" width="7.500" height="7.500" fill="none" stroke="#888" stroke-width="0.8"/><path d="M0.500 4.500h7.500M4.200 4.500v3.500" stroke="#888" stroke-width="0.7"/></svg>
<div style="left:696px;top:418px;width:4px;height:0.9px;background:#555;"></div>
<div style="left:704px;top:418.2px;width:62px;height:0.6px;background:#b5b5b5;"></div>
<div style="left:733px;top:414.5px;width:1.6px;height:7px;background:#444;"></div>
<svg style="left:766.5px;top:414.5px;" width="7" height="7" viewBox="0 0 7 7"><path d="M3.500 0.800v5.400M0.800 3.500h5.400" stroke="#444" stroke-width="1"/></svg>
<div class="t" style="top:414.0px;font-size:6.6px;line-height:8.6px;color:#555;right:4px;">100%</div>
<div style="left:0px;top:425px;width:800px;height:25px;background:#3b332a;"></div>
<div style="left:0px;top:425px;width:30px;height:25px;background:#3b332a;"></div>
<svg style="left:10px;top:432.5px;" width="11" height="11" viewBox="0 0 11 11"><path d="M0 1.600l4.600-0.700v4.300H0zM5.300 0.800L11 0v5.200H5.300zM0 5.900h4.600v4.300L0 9.500zM5.300 5.900H11V11l-5.700-0.800z" fill="#fff"/></svg>
<div style="left:30px;top:425.5px;width:214px;height:24.5px;background:#f2f2f2;"></div>
<svg style="left:37px;top:431px;" width="11" height="12" viewBox="0 0 11 12"><circle cx="6.500" cy="4.500" r="3.300" fill="none" stroke="#333" stroke-width="1"/><path d="M4.200 7L0.800 10.800" stroke="#333" stroke-width="1.100"/></svg>
<div class="t" style="top:432.2px;font-size:9.4px;line-height:12.2px;color:#2b2b2b;left:55.5px;">Type here to search</div>
<svg style="left:254px;top:432px;" width="11" height="11" viewBox="0 0 11 11"><circle cx="5.500" cy="5.500" r="3.900" fill="none" stroke="#fff" stroke-width="1.900"/></svg>
<svg style="left:283px;top:432.5px;" width="13" height="11" viewBox="0 0 13 11"><rect x="2.500" y="2.500" width="6" height="6" fill="none" stroke="#e8e8e8" stroke-width="0.9"/><path d="M2.500 0.500v1.200M8.500 0.500v1.200M2.500 9.300v1.200M8.500 9.300v1.200" stroke="#e8e8e8" stroke-width="0.9"/><path d="M11.500 1v2.300M11.500 4.700v1.600M11.500 7.700v2.300" stroke="#e8e8e8" stroke-width="1.100"/></svg>
<svg style="left:313.5px;top:429.5px;" width="17" height="17" viewBox="0 0 17 17"><defs><linearGradient id="eg" x1="0" y1="0" x2="1" y2="0.300"><stop offset="0" stop-color="#1f9be0"/><stop offset="0.550" stop-color="#2fc0c9"/><stop offset="1" stop-color="#5fd16a"/></linearGradient><linearGradient id="eg2" x1="0" y1="0" x2="0.600" y2="1"><stop offset="0" stop-color="#1b7fd4"/><stop offset="1" stop-color="#0b4d9a"/></linearGradient></defs><path d="M8.500 1C4 1 1 4.500 1 8.500c0-2.500 2.500-4.500 5.500-4.500 3 0 4.700 1.800 4.700 3.500 0 0.900-0.500 1.500-0.500 2 0 0.800 1 1.500 2.500 1.500 1.800 0 3-1.300 3-3.300C16.200 4 13 1 8.500 1z" fill="url(#eg)"/><path d="M1 8.500C1 12.600 4.300 16 8.500 16c2 0 3.800-0.800 5-2-1 0.500-2 0.700-3 0.600-3-0.300-4.800-2.800-4.500-5.300 0.100-1 0.600-1.900 1.300-2.500-0.300-0.100-0.600-0.100-0.900-0.100C3.500 6.700 1 7 1 8.500z" fill="url(#eg2)"/><path d="M6 9.300c0 2.900 2 5.200 5 5.300 1 0 1.900-0.200 2.600-0.700-1.500 1.700-4.800 1.600-6.600-0.300-1-1.100-1.300-2.800-1-4.300z" fill="#0a3f86"/></svg>
<svg style="left:345.5px;top:431px;" width="16" height="14" viewBox="0 0 16 14"><path d="M1 5l7-4.300L15 5v8H1z" fill="#1583d8"/><path d="M2.500 3.500h11v5h-11z" fill="#d9eefc"/><path d="M1 5l7 4.500L15 5v8.300H1z" fill="#2aa3f0"/><path d="M1 13.300L8 8l7 5.300z" fill="#1a74c4"/></svg>
<svg style="left:377.5px;top:431.5px;" width="15" height="13" viewBox="0 0 15 13"><path d="M0.500 1.500h5l1.200 1.500h7.800v9.500h-14z" fill="#f3b829"/><path d="M0.500 4.500h14v8h-14z" fill="#fbd75b"/><rect x="3" y="7" width="9" height="5.500" fill="#3f8fd8"/><rect x="5" y="9" width="5" height="3.500" fill="#e9f3fb"/></svg>
<div style="left:372px;top:448.5px;width:27px;height:1.5px;background:#76b9ed;"></div>
<svg style="left:409px;top:432px;" width="14" height="12" viewBox="0 0 14 12"><rect x="6" y="0.500" width="7.500" height="11" fill="#eaf1fb"/><path d="M7.500 3h5M7.500 5h5M7.500 7h5M7.500 9h5" stroke="#2b579a" stroke-width="0.700"/><rect x="0" y="2" width="8" height="8" fill="#2b579a"/></svg>
<div class="t" style="top:434.35px;font-size:5.6px;line-height:7.3px;color:#fff;font-weight:700;left:413px;transform:translateX(-50%);">W</div>
<svg style="left:439.5px;top:430.5px;" width="15" height="15" viewBox="0 0 15 15"><circle cx="7.500" cy="7.500" r="7" fill="#dd4b3e"/><path d="M7.500 7.500L1.400 4A7 7 0 0 0 6.800 14.500z" fill="#1da462"/><path d="M7.500 7.500L6.800 14.500A7 7 0 0 0 13.600 4z" fill="#ffcd46"/><path d="M1.400 4A7 7 0 0 1 13.600 4L7.500 4.300z" fill="#dd4b3e"/><circle cx="7.500" cy="7.500" r="3.200" fill="#fff"/><circle cx="7.500" cy="7.500" r="2.500" fill="#4a8af4"/></svg>
<div style="left:434px;top:448.5px;width:26px;height:1.5px;background:#76b9ed;"></div>
<div style="left:463px;top:425px;width:31px;height:25px;background:#5a534b;"></div>
<div style="left:463px;top:448.5px;width:31px;height:1.5px;background:#76b9ed;"></div>
<svg style="left:471.5px;top:432px;" width="14" height="12" viewBox="0 0 14 12"><rect x="6" y="0.500" width="7.500" height="11" fill="#e8f3ec"/><path d="M7.500 2.500h2v2h-2zM10.500 2.500h2v2h-2zM7.500 5.500h2v2h-2zM10.500 5.500h2v2h-2zM7.500 8.500h2v2h-2zM10.500 8.500h2v2h-2z" fill="#217346"/><rect x="0" y="2" width="8" height="8" fill="#1e7145"/></svg>
<div class="t" style="top:434.35px;font-size:5.6px;line-height:7.3px;color:#fff;font-weight:700;left:475.5px;transform:translateX(-50%);">X</div>
<svg style="left:502px;top:430.5px;" width="17" height="15" viewBox="0 0 17 15"><path d="M7 3.500c-3.500 0-6.500 2.300-6.500 5.500s2.500 5 5 5c1.500 0 1.300-1.500 2.500-1.500 1.800 0 5.500-0.500 5.500-4.500S10.500 3.500 7 3.500z" fill="#e9edf2" stroke="#9aa7b8" stroke-width="0.500"/><circle cx="4" cy="8" r="1.100" fill="#e0483c"/><circle cx="6.500" cy="6" r="1.100" fill="#f2c230"/><circle cx="9.500" cy="6.500" r="1.100" fill="#3f9ae0"/><circle cx="4.800" cy="11" r="1.100" fill="#4caf50"/><path d="M15.500 0.500l1 1-6 7.500-1.800 0.800 0.600-1.900z" fill="#c9983e"/></svg>
<div style="left:497px;top:448.5px;width:26px;height:1.5px;background:#76b9ed;"></div>
<svg style="left:644px;top:435px;" width="9" height="6" viewBox="0 0 9 6"><path d="M0.800 5L4.500 1.200 8.200 5" fill="none" stroke="#fff" stroke-width="0.900"/></svg>
<svg style="left:658.5px;top:434.5px;" width="11" height="7" viewBox="0 0 11 7"><rect x="0.500" y="0.500" width="8.500" height="6" fill="none" stroke="#fff" stroke-width="0.800"/><rect x="1.500" y="1.500" width="4.500" height="4" fill="#fff"/><rect x="9.300" y="2.300" width="1.200" height="2.400" fill="#fff"/></svg>
<svg style="left:674.5px;top:433px;" width="10" height="10" viewBox="0 0 10 10"><path d="M1 9A8 8 0 0 1 9 1" fill="none" stroke="#bdbdbd" stroke-width="0.800"/><path d="M3 9A6 6 0 0 1 9 3.200" fill="none" stroke="#bdbdbd" stroke-width="0.800"/><path d="M5.200 9A3.800 3.800 0 0 1 9 5.400" fill="none" stroke="#bdbdbd" stroke-width="0.800"/><circle cx="8.300" cy="8.300" r="0.900" fill="#bdbdbd"/></svg>
<svg style="left:688.5px;top:433.5px;" width="11" height="9" viewBox="0 0 11 9"><path d="M0.500 3h2l2.500-2.300v7.600L2.500 6h-2z" fill="none" stroke="#ddd" stroke-width="0.800"/><path d="M6.500 2.800a2.500 2.500 0 0 1 0 3.400M8 1.500a4.300 4.300 0 0 1 0 6" fill="none" stroke="#ddd" stroke-width="0.800"/></svg>
<div class="t" style="top:433.65px;font-size:7px;line-height:9.1px;color:#fff;left:712px;transform:translateX(-50%);">ENG</div>
<div class="t" style="top:426.6px;font-size:7.5px;line-height:9.8px;color:#fff;left:745.2px;transform:translateX(-50%);">10:02 AM</div>
<div class="t" style="top:438.9px;font-size:7.5px;line-height:9.8px;color:#fff;left:745.2px;transform:translateX(-50%);">10/1/2021</div>
<svg style="left:774px;top:432px;" width="12" height="12" viewBox="0 0 12 12"><path d="M0.500 0.500h10.500v7.500H6.500L4.700 10.200V8H0.500z" fill="none" stroke="#fff" stroke-width="0.900"/></svg>
<div style="left:230px;top:83px;width:374px;height:171px;box-shadow:0 1.5px 7px rgba(0,0,0,0.35);left:234px;top:86px;width:366px;height:164px;"></div>
<div style="left:234px;top:85.2px;width:366px;height:164.8px;background:#f0f0f0;border:0.6px solid #bcbcbc;"></div>
<div style="left:234.5px;top:85.7px;width:365px;height:17.8px;background:#fff;"></div>
<div class="t" style="top:89.35px;font-size:7.6px;line-height:9.9px;color:#9a9a9a;left:240px;">Sort</div>
<div class="t" style="top:90.05px;font-size:7.6px;line-height:9.9px;color:#9a9a9a;left:555.5px;transform:translateX(-50%);">?</div>
<svg style="left:581px;top:91px;" width="8" height="8" viewBox="0 0 8 8"><path d="M1 1l6 6M7 1l-6 6" stroke="#b4b4b4" stroke-width="0.800"/></svg>
<div style="left:238px;top:108px;width:50px;height:15.5px;background:#e1e1e1;border:0.6px solid #c0c0c0;"></div>
<div class="t" style="top:112.6px;font-size:6.4px;line-height:8.3px;color:#222;left:268.7px;transform:translateX(-50%);"><u>A</u>dd Level</div>
<div style="left:291px;top:108px;width:57px;height:15.5px;background:#e1e1e1;border:0.6px solid #c0c0c0;"></div>
<div class="t" style="top:112.65px;font-size:6.3px;line-height:8.2px;color:#222;left:325.1px;transform:translateX(-50%);"><u>D</u>elete Level</div>
<div style="left:350.5px;top:108px;width:55px;height:15.5px;background:#e1e1e1;border:0.6px solid #c0c0c0;"></div>
<div class="t" style="top:112.65px;font-size:6.3px;line-height:8.2px;color:#222;left:382.8px;transform:translateX(-50%);"><u>C</u>opy Level</div>
<div style="left:407.5px;top:108px;width:14px;height:15.5px;background:#d0d0d0;border:0.6px solid #c4c4c4;"></div>
<div style="left:423.5px;top:108px;width:14px;height:15.5px;background:#d0d0d0;border:0.6px solid #c4c4c4;"></div>
<svg style="left:411.5px;top:113.5px;" width="6" height="4" viewBox="0 0 6 4"><path d="M0.500 3.300L3 0.700l2.500 2.600z" fill="#a3a3a3"/></svg>
<svg style="left:427.5px;top:113.5px;" width="6" height="4" viewBox="0 0 6 4"><path d="M0.500 0.700h5L3 3.300z" fill="#a3a3a3"/></svg>
<div style="left:441px;top:107.5px;width:39.5px;height:15.5px;background:#e1e1e1;border:0.6px solid #c0c0c0;"></div>
<div class="t" style="top:112.1px;font-size:6.4px;line-height:8.3px;color:#222;left:460.75px;transform:translateX(-50%);"><u>O</u>ptions...</div>
<div style="left:436.5px;top:103px;width:51.8px;height:23.2px;border:2px solid #d62a30;"></div>
<svg style="left:241px;top:110.5px;" width="11" height="11" viewBox="0 0 11 11"><path d="M1 1.500h2.500M2.200 0.300v2.500" stroke="#2e75b6" stroke-width="0.800"/><path d="M4.500 2.500v6.500M3 7.500l1.500 1.700L6 7.500" fill="none" stroke="#2e75b6" stroke-width="0.800"/><path d="M7 3h2.500M7 5h2.500M7 7h2.500M7 9h2.500" stroke="#7f7f7f" stroke-width="0.800"/></svg>
<svg style="left:295.5px;top:111.5px;" width="10" height="9" viewBox="0 0 10 9"><path d="M1 1l8 7M9 1l-8 7" stroke="#333" stroke-width="1.100"/></svg>
<svg style="left:354.5px;top:110.5px;" width="10" height="11" viewBox="0 0 10 11"><rect x="0.500" y="0.500" width="5.500" height="6.500" fill="#fff" stroke="#8a8a8a" stroke-width="0.600"/><rect x="3.500" y="3.500" width="5.500" height="6.500" fill="#fff" stroke="#8a8a8a" stroke-width="0.600"/><path d="M4.700 5.500h3M4.700 7h3M4.700 8.500h3" stroke="#5b9bd5" stroke-width="0.500"/></svg>
<div style="left:524px;top:111.6px;width:8px;height:8px;background:#fff;border:0.6px solid #e2e2e2;"></div>
<div class="t" style="top:112.05px;font-size:6.5px;line-height:8.5px;color:#a6a6a6;left:536px;">My data has <u>h</u>eaders</div>
<div style="left:238px;top:126px;width:358px;height:102px;background:#fff;border:0.6px solid #b9b9b9;"></div>
<div class="t" style="top:128.7px;font-size:6.6px;line-height:8.6px;color:#444;left:241px;">Row</div>
<div class="t" style="top:128.7px;font-size:6.6px;line-height:8.6px;color:#444;left:361px;">Sort On</div>
<div class="t" style="top:128.7px;font-size:6.6px;line-height:8.6px;color:#444;left:482px;">Order</div>
<div style="left:238.5px;top:138px;width:357px;height:13.5px;background:#e4e4e4;"></div>
<div class="t" style="top:140.7px;font-size:6.3px;line-height:8.2px;color:#444;left:240px;">Sort by</div>
<div style="left:269px;top:139.3px;width:83px;height:11.5px;background:#fff;border:0.6px solid #d2d2d2;"></div>
<div style="left:341px;top:139.9px;width:10.5px;height:10.3px;background:#e8e8e8;"></div>
<svg style="left:343.3px;top:142.8px;" width="6" height="5" viewBox="0 0 6 5"><path d="M0.800 1l2.200 2.300L5.200 1" fill="none" stroke="#777" stroke-width="0.800"/></svg>
<div style="left:359px;top:139.3px;width:116px;height:11.5px;background:#fff;border:0.6px solid #d2d2d2;"></div>
<div class="t" style="top:141.25px;font-size:6.5px;line-height:8.5px;color:#333;left:362px;">Values</div>
<div style="left:479px;top:139.3px;width:114px;height:11.5px;background:#fff;border:0.6px solid #d2d2d2;"></div>
<div style="left:582px;top:139.9px;width:10.5px;height:10.3px;background:#e8e8e8;"></div>
<svg style="left:584.5px;top:142.5px;" width="6" height="5" viewBox="0 0 6 5"><path d="M0.800 1l2.200 2.300L5.200 1" fill="none" stroke="#777" stroke-width="0.800"/></svg>
<div style="left:496px;top:232px;width:46.5px;height:14.5px;background:#e1e1e1;border:0.6px solid #c0c0c0;"></div>
<div class="t" style="top:235.85px;font-size:6.8px;line-height:8.8px;color:#222;left:519.25px;transform:translateX(-50%);">OK</div>
<div style="left:549.5px;top:232px;width:46px;height:14.5px;background:#e1e1e1;border:0.6px solid #c0c0c0;"></div>
<div class="t" style="top:235.85px;font-size:6.8px;line-height:8.8px;color:#222;left:572.5px;transform:translateX(-50%);">Cancel</div>
<svg style="left:592px;top:242px;" width="7" height="7" viewBox="0 0 7 7"><path d="M6 1v0.800M6 3.500v0.800M3.500 3.500v0.800M6 6v0.800M3.500 6v0.800M1 6v0.800" stroke="#b8b8b8" stroke-width="0.900"/></svg>
<div style="left:390px;top:134px;width:119px;height:109px;box-shadow:0 1.500px 7px rgba(0,0,0,0.350);"></div>
<div style="left:390px;top:134px;width:119px;height:109px;background:#f0f0f0;border:0.6px solid #9c9c9c;"></div>
<div style="left:390.5px;top:134.5px;width:118px;height:19.5px;background:#fff;"></div>
<div class="t" style="top:139.55px;font-size:7.6px;line-height:9.9px;color:#222;left:395px;">Sort Options</div>
<div class="t" style="top:139.55px;font-size:7.6px;line-height:9.9px;color:#333;left:465px;transform:translateX(-50%);">?</div>
<svg style="left:490.5px;top:140.5px;" width="8" height="8" viewBox="0 0 8 8"><path d="M1 1l6 6M7 1l-6 6" stroke="#333" stroke-width="0.800"/></svg>
<div style="left:395px;top:159.3px;width:8px;height:8px;background:#fff;border:0.650px solid #555;"></div>
<div style="left:405px;top:158px;width:42.5px;height:11px;border:0.6px dotted #555;"></div>
<div class="t" style="top:159.9px;font-size:6.3px;line-height:8.2px;color:#222;left:406.5px;"><u>C</u>ase sensitive</div>
<div class="t" style="top:177.2px;font-size:6.8px;line-height:8.8px;color:#333;left:394.5px;">Orientation</div>
<div style="left:430px;top:182px;width:74px;height:0.6px;background:#dcdcdc;"></div>
<svg style="left:401px;top:190px;" width="9" height="9" viewBox="0 0 9 9"><circle cx="4.500" cy="4.500" r="3.600" fill="#fff" stroke="#444" stroke-width="0.700"/></svg>
<div class="t" style="top:191.2px;font-size:6.8px;line-height:8.8px;color:#222;left:412px;">Sort <u>t</u>op to bottom</div>
<svg style="left:401px;top:203.3px;" width="9" height="9" viewBox="0 0 9 9"><circle cx="4.500" cy="4.500" r="3.600" fill="#fff" stroke="#333" stroke-width="0.700"/><circle cx="4.500" cy="4.500" r="1.800" fill="#222"/></svg>
<div class="t" style="top:204.0px;font-size:6.8px;line-height:8.8px;color:#222;left:412px;">Sort <u>l</u>eft to right</div>
<div style="left:396px;top:202.2px;width:80.5px;height:11.3px;border:2px solid #d62a30;"></div>
<div style="left:396.5px;top:223.5px;width:50px;height:15.5px;background:#e5f1fb;border:0.6px solid #3c8edb;"></div>
<div class="t" style="top:227.85px;font-size:6.8px;line-height:8.8px;color:#222;left:421.5px;transform:translateX(-50%);">OK</div>
<div style="left:396.5px;top:223.5px;width:50px;height:15.5px;border:1.200px solid #3c8edb;"></div>
<div style="left:394px;top:220px;width:55.5px;height:22.5px;border:2px solid #d62a30;"></div>
<div style="left:453.5px;top:224.5px;width:51px;height:14.5px;background:#e1e1e1;border:0.6px solid #c0c0c0;"></div>
<div class="t" style="top:228.35px;font-size:6.8px;line-height:8.8px;color:#222;left:479.0px;transform:translateX(-50%);">Cancel</div>
<svg style="left:600px;top:0px;overflow:visible;" width="70" height="68" viewBox="0 0 70 68">
<g fill="none" stroke="#173a85" stroke-width="1.300" stroke-linecap="round" stroke-linejoin="round">
<g transform="translate(0.300,1.900)"><path d="M27.500 14.500c-1.500-4 0.500-6.500 3-6 1-1.700 4-2.300 7.500-1.500 3.500-0.800 8 0.300 9.500 2.200 2 0 3.200 2 2.300 5.300"/>
<path d="M29 14c3 0.600 6-0.400 8-2.500 3 1.500 8 2.300 12.500 1.200"/>
<path d="M28.500 14.500v6.500c0 6 4.500 10.500 10 10.500s10-4.500 10-10.500v-6.500"/>
<path d="M28.500 17c-2.200 0-2.200 5 0 5M48.500 17c2.200 0 2.200 5 0 5"/>
<path d="M33 23.500c1.500 4.700 9.500 4.700 11 0z"/>
<path d="M32.500 18.500c0.600-1 2-1 2.600 0M42 18.500c0.600-1 2-1 2.600 0"/>
<path d="M34 30.500l-1 4 5.500 4.500 5.500-4.500-1-4"/></g>
<path d="M33 36.500l-6 3.500M44.500 36.500l7.500 3.500c3 1.300 4.500 4 5 8l1.500 12.500"/>
<path d="M16 40.700h36.500l6.500 19.800H21.500z" fill="#f3f3f3" fill-opacity="0.850"/>
<circle cx="35.800" cy="50.500" r="4.400"/>
<rect x="19.500" y="60.500" width="41" height="3.300" rx="1.600"/>
<path d="M12 35.500l5 2.300M17.500 27.500l4 4.500M10 43.500l5 1.300M8.500 52.500h5M64.500 34.500l-5 2.500M59 27.500l-3.500 4.500M62.500 45l5-1.300"/>
</g></svg>
<svg style="left:665px;top:20px;" width="135" height="32" viewBox="0 0 135 32"><text x="5" y="16.300" font-family="Liberation Sans, sans-serif" font-weight="700" font-size="14.800" fill="#173a85" stroke="#173a85" stroke-width="0.900" stroke-linejoin="round" textLength="120.500" lengthAdjust="spacingAndGlyphs">ThuthuatOffice</text><text x="17" y="26.900" font-family="Liberation Sans, sans-serif" font-weight="700" font-size="4.100" fill="#173a85" stroke="#173a85" stroke-width="0.250" textLength="97" lengthAdjust="spacing">TRI KỶ CỦA DÂN CÔNG SỞ</text></svg>
</div></body></html>
